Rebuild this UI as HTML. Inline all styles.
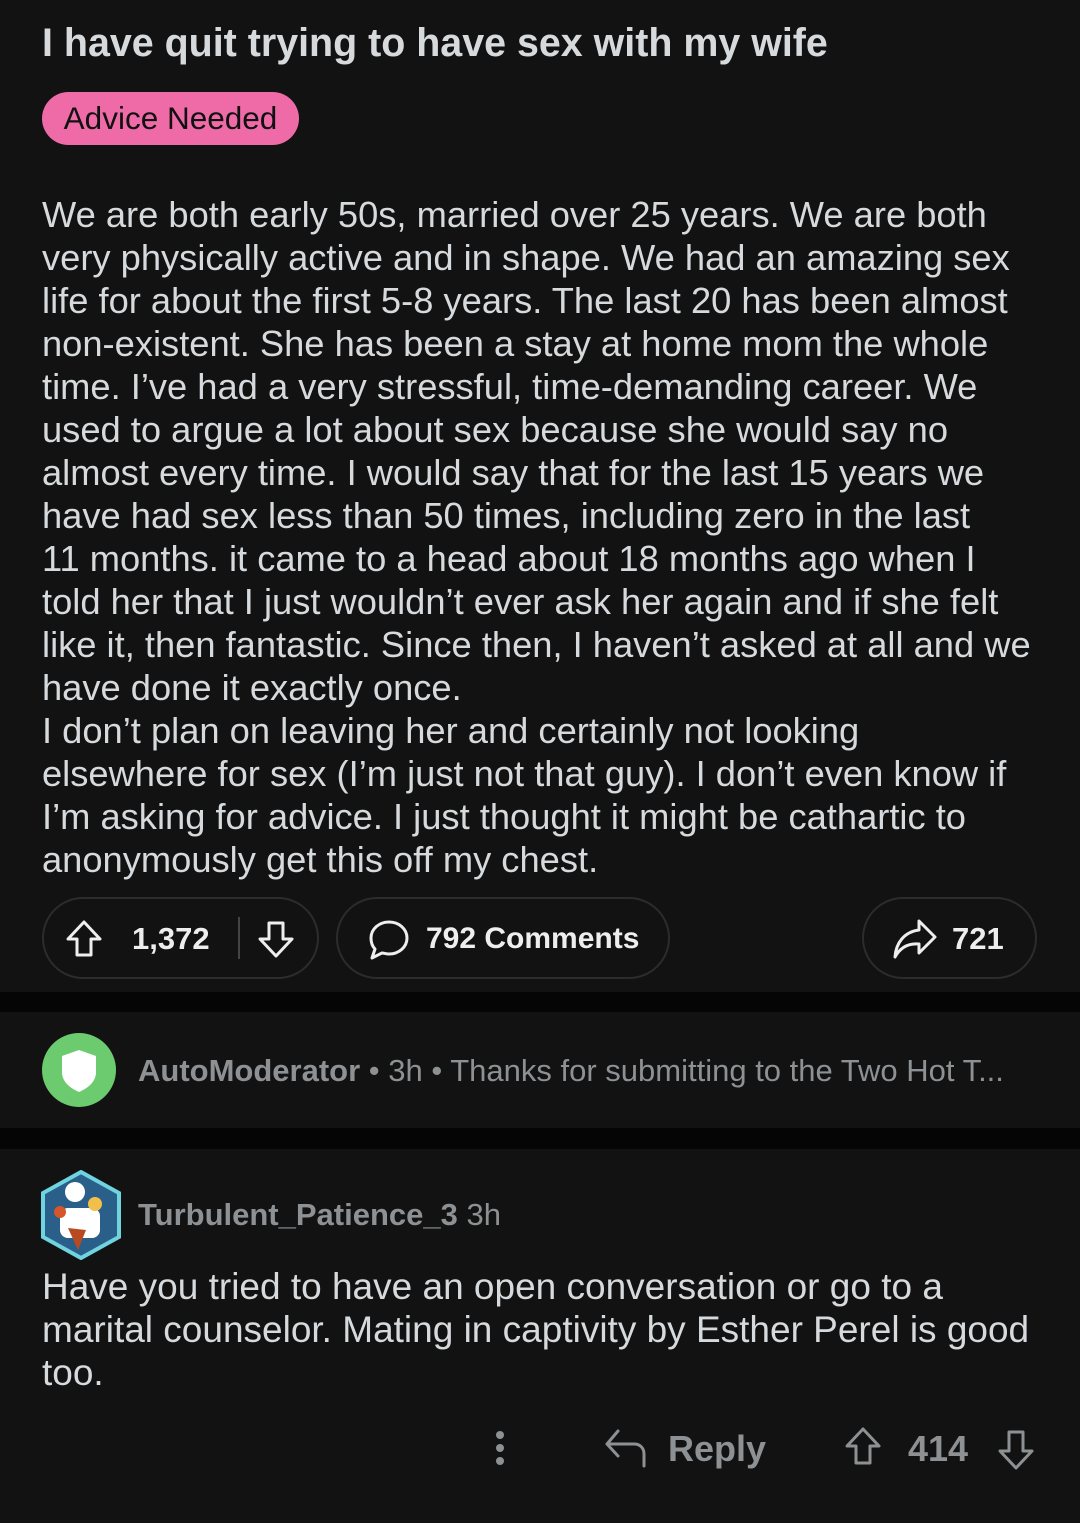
<!DOCTYPE html>
<html><head><meta charset="utf-8"><style>
*{margin:0;padding:0;box-sizing:border-box}
body{width:1080px;height:1523px;background:#121212;font-family:"Liberation Sans",sans-serif;color:#d7dadc;overflow:hidden;position:relative}
.abs{position:absolute}
.title{left:42px;top:21px;font-size:39.4px;font-weight:bold;color:#d7dadc;white-space:nowrap}
.pill{left:42px;top:92px;width:257px;height:53px;border-radius:27px;background:#ef6ba8;color:#111;font-size:31.5px;line-height:53px;text-align:center}
.body{left:42px;top:193px;font-size:36.3px;line-height:43px;color:#d7dadc}
.body div{white-space:nowrap;height:43px}
.btn{top:897px;height:82px;border:2px solid #2c2c2c;border-radius:41px;color:#eee;font-weight:bold;font-size:31px;display:flex;align-items:center}
.sep{left:0;width:1080px;background:#050505}
.gray{color:#8d9193}
</style></head><body>
<div class="abs title">I have quit trying to have sex with my wife</div>
<div class="abs pill">Advice Needed</div>
<div class="abs body">
<div>We are both early 50s, married over 25 years. We are both</div>
<div>very physically active and in shape. We had an amazing sex</div>
<div>life for about the first 5-8 years. The last 20 has been almost</div>
<div>non-existent. She has been a stay at home mom the whole</div>
<div>time. I’ve had a very stressful, time-demanding career. We</div>
<div>used to argue a lot about sex because she would say no</div>
<div>almost every time. I would say that for the last 15 years we</div>
<div>have had sex less than 50 times, including zero in the last</div>
<div>11 months. it came to a head about 18 months ago when I</div>
<div>told her that I just wouldn’t ever ask her again and if she felt</div>
<div>like it, then fantastic. Since then, I haven’t asked at all and we</div>
<div>have done it exactly once.</div>
<div>I don’t plan on leaving her and certainly not looking</div>
<div>elsewhere for sex (I’m just not that guy). I don’t even know if</div>
<div>I’m asking for advice. I just thought it might be cathartic to</div>
<div>anonymously get this off my chest.</div>
</div>

<div class="abs btn" style="left:42px;width:277px">
<svg class="abs" style="left:20px;top:20px" width="40" height="40" viewBox="0 0 40 40"><path d="M20 3 L36 20 H27 V36 H13 V20 H4 Z" fill="none" stroke="#eee" stroke-width="3" stroke-linejoin="round"/></svg>
<span class="abs" style="left:88px;top:22px">1,372</span>
<div class="abs" style="left:194px;top:18px;width:2px;height:42px;background:#444"></div>
<svg class="abs" style="left:212px;top:20px" width="40" height="40" viewBox="0 0 40 40"><path d="M20 37 L36 20 H27 V4 H13 V20 H4 Z" fill="none" stroke="#eee" stroke-width="3" stroke-linejoin="round"/></svg>
</div>
<div class="abs btn" style="left:336px;width:334px">
<svg class="abs" style="left:30px;top:20px" width="42" height="42" viewBox="0 0 42 42"><path d="M21 3 C31 3 39 10 39 19 C39 28 31 35 21 35 C18 35 16 34 14 34 L4 39 L7 30 C4 27 3 23 3 19 C3 10 11 3 21 3 Z" fill="none" stroke="#eee" stroke-width="3" stroke-linejoin="round"/></svg>
<span class="abs" style="left:88px;top:23px;font-size:30px">792 Comments</span>
</div>
<div class="abs btn" style="left:862px;width:175px">
<svg class="abs" style="left:28px;top:18px" width="46" height="44" viewBox="0 0 46 44"><path d="M27 4 L43 20 L27 36 V27 C16 26 8 31 3 40 C4 26 12 15 27 13 Z" fill="none" stroke="#eee" stroke-width="3" stroke-linejoin="round"/></svg>
<span class="abs" style="left:88px;top:22px">721</span>
</div>

<div class="abs sep" style="top:992px;height:20px"></div>
<div class="abs" style="left:42px;top:1033px;width:74px;height:74px;border-radius:50%;background:#6dcb6f"></div>
<svg class="abs" style="left:58px;top:1048px" width="42" height="46" viewBox="0 0 42 46"><path d="M21 2 L38 8 V24 C38 34 30 40 21 44 C12 40 4 34 4 24 V8 Z" fill="#fff"/></svg>
<div class="abs gray" style="left:138px;top:1053px;font-size:31px;white-space:nowrap"><span style="font-weight:bold">AutoModerator</span> • 3h • Thanks for submitting to the Two Hot T...</div>
<div class="abs sep" style="top:1128px;height:21px"></div>

<svg class="abs" style="left:40px;top:1170px" width="82" height="90" viewBox="0 0 82 90"><path d="M41 2 L79 23 V67 L41 88 L3 67 V23 Z" fill="#2a5f8a" stroke="#6fd3e0" stroke-width="4"/><circle cx="35" cy="22" r="10" fill="#fff"/><rect x="20" y="38" width="40" height="30" rx="8" fill="#fff"/><circle cx="55" cy="34" r="7" fill="#f2c04a"/><path d="M28 58 L38 80 L46 60 Z" fill="#b84a22"/><circle cx="20" cy="42" r="6" fill="#d5562b"/></svg>
<div class="abs gray" style="left:138px;top:1197px;font-size:31px"><span style="font-weight:bold">Turbulent_Patience_3</span> 3h</div>
<div class="abs" style="left:42px;top:1265px;font-size:37px;line-height:43px;color:#d7dadc">
<div style="white-space:nowrap">Have you tried to have an open conversation or go to a</div>
<div style="white-space:nowrap">marital counselor. Mating in captivity by Esther Perel is good</div>
<div>too.</div>
</div>

<svg class="abs" style="left:490px;top:1430px" width="20" height="40" viewBox="0 0 20 40"><circle cx="10" cy="5" r="4" fill="#8d9193"/><circle cx="10" cy="18" r="4" fill="#8d9193"/><circle cx="10" cy="31" r="4" fill="#8d9193"/></svg>
<svg class="abs" style="left:604px;top:1428px" width="44" height="42" viewBox="0 0 44 42"><path d="M14 3 L3 16 L14 28 M3 16 H30 C36 16 40 20 40 26 V38" fill="none" stroke="#8d9193" stroke-width="3" stroke-linecap="round" stroke-linejoin="round"/></svg>
<div class="abs gray" style="left:668px;top:1428px;font-size:36px;font-weight:bold">Reply</div>
<svg class="abs" style="left:842px;top:1426px" width="42" height="44" viewBox="0 0 42 44"><path d="M21 3 L37 20 H28 V37 H14 V20 H5 Z" fill="none" stroke="#8d9193" stroke-width="3" stroke-linejoin="round"/></svg>
<div class="abs gray" style="left:908px;top:1428px;font-size:36px;font-weight:bold">414</div>
<svg class="abs" style="left:995px;top:1428px" width="42" height="44" viewBox="0 0 42 44"><path d="M21 40 L37 23 H28 V4 H14 V23 H5 Z" fill="none" stroke="#8d9193" stroke-width="3" stroke-linejoin="round"/></svg>
</body></html>
